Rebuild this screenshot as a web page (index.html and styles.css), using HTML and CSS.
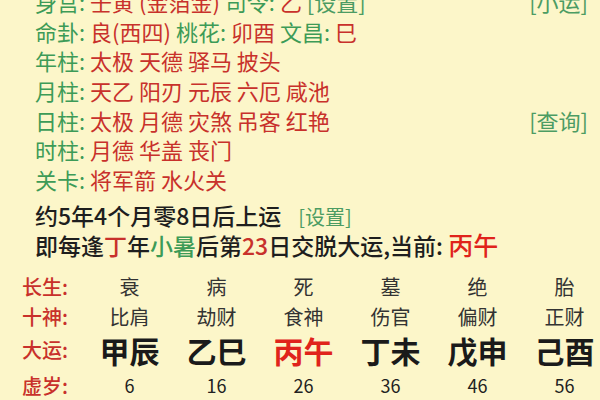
FILE: index.html
```html
<!DOCTYPE html>
<html lang="zh">
<head>
<meta charset="utf-8">
<link rel="stylesheet" href="styles.css">
</head>
<body>
<div class="page">
  <div class="info">
    <div class="line"><span class="txt"><span class="g">身宫:</span> <span class="r">壬寅 (金箔金)</span> <span class="g">司令:</span> <span class="r">乙</span> <span class="link">[设置]</span></span><span class="link">[小运]</span></div>
    <div class="line"><span class="txt"><span class="g">命卦:</span> <span class="r">良(西四)</span> <span class="g">桃花:</span> <span class="r">卯酉</span> <span class="g">文昌:</span> <span class="r">巳</span></span></div>
    <div class="line"><span class="txt"><span class="g">年柱:</span> <span class="r">太极 天德 驿马 披头</span></span></div>
    <div class="line"><span class="txt"><span class="g">月柱:</span> <span class="r">天乙 阳刃 元辰 六厄 咸池</span></span></div>
    <div class="line"><span class="txt"><span class="g">日柱:</span> <span class="r">太极 月德 灾煞 吊客 红艳</span></span><span class="link">[查询]</span></div>
    <div class="line"><span class="txt"><span class="g">时柱:</span> <span class="r">月德 华盖 丧门</span></span></div>
    <div class="line"><span class="txt"><span class="g">关卡:</span> <span class="r">将军箭 水火关</span></span></div>
  </div>
  <div class="yun">
    <div class="yline first">约5年4个月零8日后上运<span class="small-link">[设置]</span></div>
    <div class="yline">即每逢<span class="r">丁</span>年<span class="g">小暑</span>后第<span class="r">23</span>日交脱大运,当前: <span class="cur">丙午</span></div>
  </div>
  <div class="table">
    <div class="lab">长生:</div>
    <div class="val">衰</div><div class="val">病</div><div class="val">死</div><div class="val">墓</div><div class="val">绝</div><div class="val">胎</div>
    <div class="lab">十神:</div>
    <div class="val">比肩</div><div class="val">劫财</div><div class="val">食神</div><div class="val">伤官</div><div class="val">偏财</div><div class="val">正财</div>
    <div class="lab">大运:</div>
    <div class="big">甲辰</div><div class="big">乙巳</div><div class="big now">丙午</div><div class="big">丁未</div><div class="big">戊申</div><div class="big">己酉</div>
    <div class="lab">虚岁:</div>
    <div class="num">6</div><div class="num">16</div><div class="num">26</div><div class="num">36</div><div class="num">46</div><div class="num">56</div>
  </div>
</div>
</body>
</html>
```

FILE: styles.css
```css
html, body {
  margin: 0;
  padding: 0;
  overflow: hidden;
}
body {
  width: 600px;
  height: 400px;
  background: #fcf6c9;
  font-family: "Noto Sans CJK SC", "Noto Sans", sans-serif;
  color: #1e1e1e;
}
.page {
  display: flex;
  flex-direction: column;
}
.info {
  margin-top: -13px;
  padding-left: 35px;
  padding-right: 12px;
  font-size: 22px;
  font-weight: 400;
}
.line {
  display: flex;
  justify-content: space-between;
  align-items: center;
  height: 29.7px;
  line-height: 29.7px;
  white-space: nowrap;
}
.g { color: #3d9b57; }
.r { color: #c8312b; }
.link {
  color: #4c9c63;
  font-weight: 400;
}
.yun {
  padding-left: 35px;
  margin-top: 5px;
  font-size: 23px;
  font-weight: 500;
  white-space: nowrap;
}
.yline {
  height: 29px;
  line-height: 29px;
}
.yline.first {
  height: 30px;
  line-height: 30px;
}
.small-link {
  margin-left: 17px;
  color: #4c9c63;
  font-size: 20px;
  font-weight: 400;
}
.cur {
  color: #e0231b;
  font-size: 25px;
}
.table {
  margin-top: 13px;
  margin-left: 22px;
  display: grid;
  grid-template-columns: 64px repeat(6, 87px);
  grid-template-rows: 30px 30px 36px 36px;
  align-items: center;
  line-height: 1.2;
}
.lab {
  color: #c8312b;
  font-size: 20px;
  font-weight: 500;
  white-space: nowrap;
}
.val {
  text-align: center;
  font-size: 20px;
  color: #333;
}
.big {
  text-align: center;
  font-size: 30px;
  font-weight: bold;
  color: #1a1a1a;
}
.big.now {
  color: #e0231b;
}
.num {
  text-align: center;
  font-size: 18px;
  color: #222;
}
```
